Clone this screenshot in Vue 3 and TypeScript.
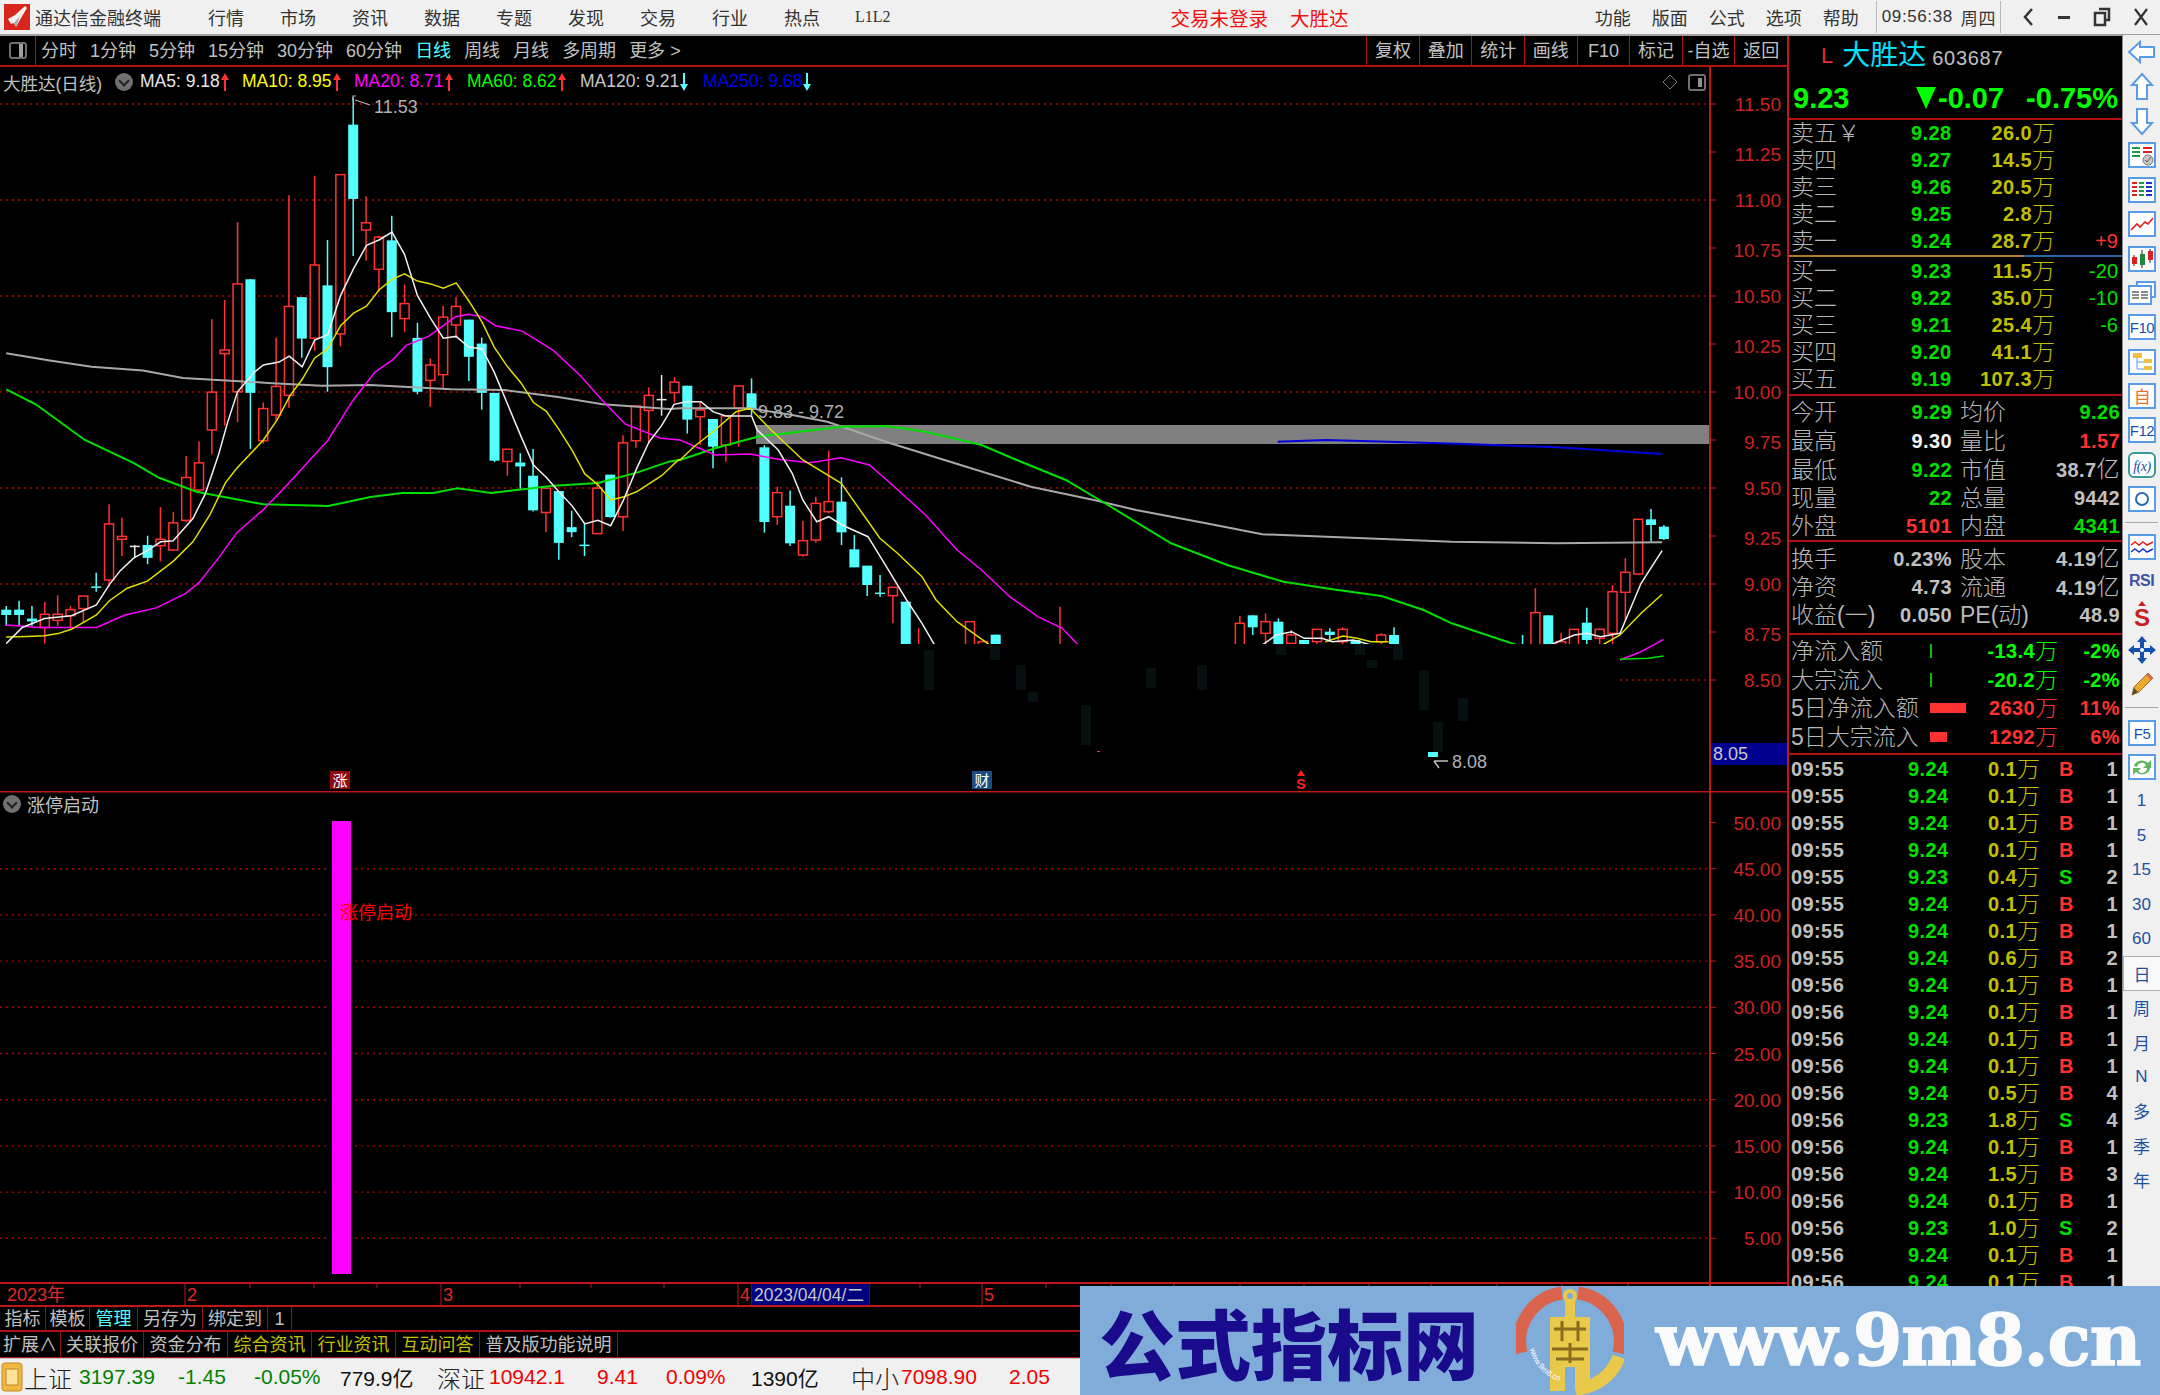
<template>
  <div class="terminal">
    <!-- 标题栏 -->
    <header class="titlebar">
      <svg class="app-logo" width="26" height="26" viewBox="0 0 26 26">
        <rect width="26" height="26" fill="#d8261c" />
        <path d="M4 15 L11 11 L21 2 L23 4 L17 14 L12 23 L10 19 L7 20 Z" fill="#f4f0ee" />
        <path d="M10 19 L16 12 L12 23 Z" fill="#a8a8a8" />
      </svg>
      <span class="app-name">通达信金融终端</span>
      <nav class="menu main-menu">
        <span v-for="m in mainMenu" :key="m">{{ m }}</span>
        <span class="l1l2">L1L2</span>
      </nav>
      <div class="login">交易未登录<span>大胜达</span></div>
      <div class="title-right">
        <nav class="menu side-menu">
          <span v-for="m in sideMenu" :key="m">{{ m }}</span>
        </nav>
        <div class="clock"><span>09:56:38</span><span>周四</span></div>
        <div class="win-btns">
          <svg width="14" height="22" viewBox="0 0 14 22"><path d="M11 3 L4 11 L11 19" fill="none" stroke="#333" stroke-width="2.5" /></svg>
          <svg width="16" height="22" viewBox="0 0 16 22"><rect x="2" y="10" width="12" height="3" fill="#333" /></svg>
          <svg width="18" height="22" viewBox="0 0 18 22"><path d="M6 3 H16 V14 H13 M2 7 H12 V19 H2 Z" fill="none" stroke="#333" stroke-width="2.5" /></svg>
          <svg width="18" height="22" viewBox="0 0 18 22"><path d="M3 3 L15 19 M15 3 L3 19" stroke="#333" stroke-width="2.2" /></svg>
        </div>
      </div>
    </header>

    <div class="workspace">
      <main class="main">
        <!-- 周期工具条 -->
        <div class="toolbar">
          <div class="toggle-cell"><i class="toggle-icon"></i></div>
          <div class="periods">
            <span v-for="p in periods" :key="p" :class="{ active: p === '日线' }">{{ p }}</span>
            <span>更多 &gt;</span>
          </div>
          <div class="tools">
            <span v-for="t in tools" :key="t">{{ t }}</span>
          </div>
        </div>

        <!-- K线主图 -->
        <section class="pane pane-kline">
          <svg class="chart" width="1787" height="724" viewBox="0 67 1787 724">
            <defs>
              <clipPath id="visible-area">
                <rect x="0" y="67" width="1620" height="577" />
                <rect x="1620" y="67" width="90" height="724" />
              </clipPath>
            </defs>
            <line v-for="y in gridTop" :key="y" x1="0" :y1="y" x2="1710" :y2="y" class="dotted" />
            <line x1="1620" y1="680" x2="1710" y2="680" class="dotted" />
            <rect x="756" y="425" width="954" height="19" fill="#808080" />
            <rect v-for="g in ghosts" :key="g[0]" :x="g[0]" :y="g[1]" width="10" :height="g[2]" fill="#061010" />
            <g clip-path="url(#visible-area)">
              <g v-for="c in candles" :key="c.i">
                <template v-if="c.kind === 'r'">
                  <line :x1="c.x" :y1="c.hi" :x2="c.x" :y2="c.top" stroke="#ff3232" stroke-width="1.5" />
                  <line :x1="c.x" :y1="c.bot" :x2="c.x" :y2="c.lo" stroke="#ff3232" stroke-width="1.5" />
                  <rect :x="c.x - 4.5" :y="c.top" width="9" :height="c.bot - c.top" fill="#000" stroke="#ff3232" stroke-width="1.5" />
                </template>
                <template v-else>
                  <line :x1="c.x" :y1="c.hi" :x2="c.x" :y2="c.lo" :stroke="c.kind === 'c' ? '#54ffff' : '#e8e8e8'" stroke-width="1.5" />
                  <rect v-if="c.bot - c.top > 1" :x="c.x - 5" :y="c.top" width="10" :height="c.bot - c.top" fill="#54ffff" />
                  <line v-else :x1="c.x - 5" :y1="c.top" :x2="c.x + 5" :y2="c.top" :stroke="c.kind === 'c' ? '#54ffff' : '#e8e8e8'" stroke-width="1.5" />
                </template>
              </g>
              <polyline v-for="(l, n) in maLines" :key="n" :points="l.points" :stroke="l.color" :stroke-width="l.width" fill="none" />
            </g>
            <polyline :points="ma20Tail" stroke="#ff00ff" stroke-width="1.5" fill="none" />
            <polyline :points="ma60Tail" stroke="#00e000" stroke-width="1.5" fill="none" />

            <!-- 最高最低标注 -->
            <path d="M353 101 V96 H356 M355 100 L370 105" stroke="#b0b0b0" stroke-width="1.2" fill="none" />
            <text x="374" y="113" class="mark-text">11.53</text>
            <text x="758" y="418" class="mark-text">9.83 - 9.72</text>
            <rect x="1097" y="751" width="3" height="1" fill="#ff3232" />
            <rect x="1428" y="752" width="10" height="5" fill="#54ffff" />
            <path d="M1448 761 H1434 M1434 761 L1439 768" stroke="#c0c0c0" stroke-width="1.5" fill="none" />
            <text x="1452" y="768" class="mark-text">8.08</text>

            <!-- 事件标记 -->
            <rect x="330" y="771" width="20" height="18" fill="#8c0c10" />
            <text x="340" y="786" class="badge-text">涨</text>
            <rect x="972" y="771" width="20" height="18" fill="#1c4c80" />
            <text x="982" y="786" class="badge-text">财</text>
            <path d="M1301 770 L1305 776 H1297 Z" fill="#ff2020" />
            <text x="1301" y="789" class="s-mark">S</text>

            <!-- 价格轴 -->
            <g v-for="a in priceAxis" :key="a.label">
              <line x1="1710" :y1="a.y" x2="1716" :y2="a.y" stroke="#c01818" />
              <text x="1781" :y="a.textY" class="axis-text">{{ a.label }}</text>
            </g>
            <rect x="1711" y="743" width="76" height="22" fill="#000090" />
            <text x="1713" y="760" class="price-tag">8.05</text>
            <line x1="1710" y1="67" x2="1710" y2="791" stroke="#c01818" stroke-width="2" />
          </svg>

          <div class="legend">
            <span class="stock-title">大胜达(日线)</span>
            <i class="round-btn"></i>
            <span v-for="m in legend" :key="m.name" class="ma-item" :style="{ color: m.color, left: m.left + 'px' }"><span>{{ m.name }}: {{ m.value }}</span><svg width="10" height="20" viewBox="0 0 10 20">
                <path v-if="m.up" d="M5 1 L9 8 H6 V19 H4 V8 H1 Z" fill="#ff3030" />
                <path v-else d="M4 1 H6 V12 H9 L5 19 L1 12 H4 Z" fill="#54ffff" />
              </svg></span>
          </div>
          <svg class="corner-icons" width="46" height="20" viewBox="0 0 46 20">
            <path d="M9 3 L16 10 L9 17 L2 10 Z" fill="none" stroke="#808080" />
            <rect x="28" y="3" width="16" height="15" rx="2" fill="none" stroke="#707070" stroke-width="2" />
            <rect x="37" y="6" width="4" height="9" fill="#909090" />
          </svg>
        </section>

        <!-- 副图 -->
        <section class="pane pane-sub">
          <svg class="chart" width="1787" height="491" viewBox="0 791 1787 491">
            <line x1="0" y1="791.5" x2="1787" y2="791.5" stroke="#c01818" stroke-width="2" />
            <g v-for="g in subAxis" :key="g.label">
              <template v-if="g.label !== '50.00'">
                <line x1="0" :y1="g.y" x2="328" :y2="g.y" class="dotted" />
                <line x1="355" :y1="g.y" x2="1710" :y2="g.y" class="dotted" />
              </template>
              <line x1="1710" :y1="g.y" x2="1716" :y2="g.y" stroke="#c01818" />
              <text x="1781" :y="g.y + 7" class="axis-text">{{ g.label }}</text>
            </g>
            <rect x="332" y="821" width="19" height="453" fill="#ff00ff" />
            <text x="340" y="919" class="signal-text">涨停启动</text>
            <line x1="1710" y1="791" x2="1710" y2="1282" stroke="#c01818" stroke-width="2" />
          </svg>
          <div class="sub-title"><i class="round-btn"></i><span>涨停启动</span></div>
        </section>

        <!-- 时间轴 -->
        <svg class="time-axis" width="1787" height="25" viewBox="0 1282 1787 25">
          <line x1="0" y1="1283" x2="1787" y2="1283" stroke="#c01818" stroke-width="2" />
          <line x1="0" y1="1306" x2="1787" y2="1306" stroke="#c01818" stroke-width="2" />
          <line v-for="x in monthLines" :key="x" :x1="x" y1="1283" :x2="x" y2="1306" stroke="#c01818" />
          <line v-for="x in dayTicks" :key="x" :x1="x" y1="1283" :x2="x" y2="1288" stroke="#c01818" />
          <line x1="1710" y1="1283" x2="1710" y2="1306" stroke="#c01818" stroke-width="2" />
          <rect x="752" y="1284" width="117" height="21" fill="#000080" />
          <text x="7" y="1301" class="time-text">2023年</text>
          <text x="187" y="1301" class="time-text">2</text>
          <text x="443" y="1301" class="time-text">3</text>
          <text x="740" y="1301" class="time-text">4</text>
          <text x="754" y="1301" class="date-text">2023/04/04/二</text>
          <text x="984" y="1301" class="time-text">5</text>
        </svg>

        <div class="tab-row first">
          <span v-for="t in tabsOne" :key="t.text" :class="t.tone">{{ t.text }}</span>
        </div>
        <div class="tab-row second">
          <span v-for="t in tabsTwo" :key="t.text" :class="t.tone">{{ t.text }}</span>
        </div>
      </main>

      <!-- 右侧盘口 -->
      <aside class="quote">
        <div class="q-name"><span class="flag">L</span><span class="name">大胜达</span><span class="code">603687</span></div>
        <div class="q-price">
          <span class="last">9.23</span>
          <span class="chg"><i class="down-tri"></i>-0.07</span>
          <span class="pct">-0.75%</span>
        </div>

        <div class="book sell">
          <div v-for="r in sellBook" :key="r.label" class="book-row">
            <span class="cjk">{{ r.label }}</span><b class="green">{{ r.price }}</b>
            <span class="vol"><b>{{ r.vol }}</b><em>万</em></span><span class="delta" :class="r.deltaTone">{{ r.delta }}</span>
          </div>
        </div>
        <div class="book-split"></div>
        <div class="book buy">
          <div v-for="r in buyBook" :key="r.label" class="book-row">
            <span class="cjk">{{ r.label }}</span><b class="green">{{ r.price }}</b>
            <span class="vol"><b>{{ r.vol }}</b><em>万</em></span><span class="delta" :class="r.deltaTone">{{ r.delta }}</span>
          </div>
        </div>

        <div class="stats s5">
          <div v-for="r in statsOne" :key="r[0]" class="stat-row">
            <span class="cjk">{{ r[0] }}</span><b :class="r[2]">{{ r[1] }}<em v-if="r[3]">{{ r[3] }}</em></b>
            <span class="cjk">{{ r[4] }}</span><b :class="r[6]">{{ r[5] }}<em v-if="r[7]">{{ r[7] }}</em></b>
          </div>
        </div>
        <div class="stats s3">
          <div v-for="r in statsTwo" :key="r[0]" class="stat-row">
            <span class="cjk">{{ r[0] }}</span><b :class="r[2]">{{ r[1] }}<em v-if="r[3]">{{ r[3] }}</em></b>
            <span class="cjk">{{ r[4] }}</span><b :class="r[6]">{{ r[5] }}<em v-if="r[7]">{{ r[7] }}</em></b>
          </div>
        </div>

        <div class="flows">
          <div v-for="f in flows" :key="f.label" class="flow-row" :class="f.tone">
            <span class="cjk">{{ f.label }}</span>
            <span class="flow-val"><i class="flow-bar" :style="{ width: f.bar + 'px', height: f.bar > 2 ? '10px' : '14px' }"></i><b>{{ f.val }}</b><em>万</em></span>
            <b class="flow-pct">{{ f.pct }}</b>
          </div>
        </div>

        <div class="trades">
          <div v-for="(t, n) in trades" :key="n" class="trade-row">
            <b class="grey">{{ t.time }}</b><b class="green">{{ t.price }}</b>
            <span class="vol"><b>{{ t.vol }}</b><em>万</em></span>
            <b class="side" :class="t.side === 'B' ? 'red' : 'green'">{{ t.side }}</b>
            <b class="count grey">{{ t.count }}</b>
          </div>
        </div>
      </aside>

      <!-- 右侧工具栏 -->
      <aside class="rail">
        <div class="rail-item"><svg width="30" height="26" viewBox="0 0 30 26"><path d="M2 13 L13 3 V8 H27 V18 H13 V23 Z" class="arrow" /></svg></div>
        <div class="rail-item"><svg width="26" height="30" viewBox="0 0 26 30"><path d="M13 2 L23 13 H18 V27 H8 V13 H3 Z" class="arrow" /></svg></div>
        <div class="rail-item"><svg width="26" height="30" viewBox="0 0 26 30"><path d="M13 28 L23 17 H18 V3 H8 V17 H3 Z" class="arrow" /></svg></div>
        <div class="rail-item"><svg width="28" height="26" viewBox="0 0 28 26">
          <rect x="1" y="1" width="26" height="24" class="ibox" />
          <path d="M4 6 H12 M4 10 H12 M4 14 H12" stroke="#1a9a3a" stroke-width="2" /><path d="M15 6 H24 M15 10 H24" stroke="#e02020" stroke-width="2" />
          <circle cx="20" cy="18" r="5" fill="#c8c8c8" stroke="#777" /><path d="M17 18 L19 20 L23 15" stroke="#555" fill="none" />
        </svg></div>
        <div class="rail-item"><svg width="28" height="26" viewBox="0 0 28 26">
          <rect x="1" y="1" width="26" height="24" class="ibox" />
          <path d="M4 6 H9 M4 10 H9 M4 14 H9 M4 18 H9" stroke="#e02020" stroke-width="2" /><path d="M11 6 H16 M11 10 H16 M11 14 H16 M11 18 H16" stroke="#1a9a3a" stroke-width="2" /><path d="M18 6 H24 M18 10 H24 M18 14 H24 M18 18 H24" stroke="#2030d0" stroke-width="2" />
        </svg></div>
        <div class="rail-item"><svg width="28" height="26" viewBox="0 0 28 26">
          <rect x="1" y="1" width="26" height="24" class="ibox" />
          <path d="M3 19 L9 13 L12 16 L17 11 L20 13 L25 7" stroke="#e02020" stroke-width="1.6" fill="none" />
        </svg></div>
        <div class="rail-item"><svg width="28" height="26" viewBox="0 0 28 26">
          <rect x="1" y="1" width="26" height="24" class="ibox" />
          <path d="M6 9 V20 M14 4 V22 M22 3 V17" stroke="#222" /><rect x="4" y="11" width="5" height="7" fill="#e02020" /><rect x="12" y="8" width="5" height="11" fill="#1a8a3a" /><rect x="20" y="5" width="5" height="9" fill="#e02020" />
        </svg></div>
        <div class="rail-item"><svg width="28" height="26" viewBox="0 0 28 26">
          <path d="M9 5 V2 H27 V17 H23" fill="#fff" stroke="#5a9be8" stroke-width="2" />
          <rect x="1" y="6" width="22" height="18" class="ibox" />
          <path d="M4 12 H11 M13 12 H20 M4 15 H11 M13 15 H20 M4 18 H11 M13 18 H20" stroke="#666" stroke-width="1.6" />
        </svg></div>
        <div class="rail-item"><svg width="28" height="26" viewBox="0 0 28 26"><rect x="1" y="1" width="26" height="24" class="ibox" /><text x="14" y="19" class="itext">F10</text></svg></div>
        <div class="rail-item"><svg width="28" height="26" viewBox="0 0 28 26">
          <rect x="1" y="1" width="26" height="24" class="ibox" />
          <path d="M9 8 V20 H16 M9 13 H16" stroke="#5a9be8" fill="none" /><rect x="5" y="4" width="9" height="5" fill="#f0c040" /><rect x="16" y="10" width="8" height="4" fill="#f0c040" /><rect x="16" y="17" width="8" height="4" fill="#f0c040" />
        </svg></div>
        <div class="rail-item"><svg width="28" height="26" viewBox="0 0 28 26"><rect x="1" y="1" width="26" height="24" class="ibox" /><text x="14" y="20" class="itext orange">自</text></svg></div>
        <div class="rail-item"><svg width="28" height="26" viewBox="0 0 28 26"><rect x="1" y="1" width="26" height="24" class="ibox" /><text x="14" y="19" class="itext">F12</text></svg></div>
        <div class="rail-item"><svg width="28" height="26" viewBox="0 0 28 26"><rect x="1" y="1" width="26" height="24" rx="5" class="ibox teal" /><text x="14" y="19" class="itext fx">f(x)</text></svg></div>
        <div class="rail-item"><svg width="28" height="26" viewBox="0 0 28 26"><rect x="1" y="1" width="26" height="24" class="ibox" /><circle cx="14" cy="13" r="6" fill="none" stroke="#2a6ab0" stroke-width="2" /></svg></div>
        <div class="rail-div"></div>
        <div class="rail-item"><svg width="28" height="26" viewBox="0 0 28 26">
          <rect x="1" y="1" width="26" height="24" class="ibox" />
          <path d="M3 11 L7 8 L11 11 L15 8 L19 11 L25 8" stroke="#e02020" fill="none" stroke-width="1.5" /><path d="M3 18 L7 15 L11 18 L15 15 L19 18 L25 15" stroke="#2030d0" fill="none" stroke-width="1.5" />
        </svg></div>
        <div class="rail-item rsi">RSI</div>
        <div class="rail-item"><svg width="26" height="30" viewBox="0 0 26 30"><path d="M13 1 L17 6 H9 Z" fill="#d02020" /><text x="13" y="26" class="dollar">S</text></svg></div>
        <div class="rail-item"><svg width="30" height="30" viewBox="0 0 30 30">
          <path d="M15 1 L20 7 H17 V13 H23 V10 L29 15 L23 20 V17 H17 V23 H20 L15 29 L10 23 H13 V17 H7 V20 L1 15 L7 10 V13 H13 V7 H10 Z" fill="#1450b0" />
          <circle cx="15" cy="15" r="2" fill="#fff" />
        </svg></div>
        <div class="rail-item"><svg width="28" height="28" viewBox="0 0 28 28">
          <path d="M4 25 L6 17 L20 3 L25 8 L11 22 Z" fill="#eda832" stroke="#a07020" /><path d="M4 25 L6 18 L10 22 Z" fill="#5a4a30" /><path d="M20 3 L25 8 L23 10 L18 5 Z" fill="#d96a5a" />
        </svg></div>
        <div class="rail-div low"></div>
        <div class="rail-item"><svg width="28" height="26" viewBox="0 0 28 26"><rect x="1" y="1" width="26" height="24" class="ibox" /><text x="14" y="19" class="itext">F5</text></svg></div>
        <div class="rail-item"><svg width="28" height="26" viewBox="0 0 28 26">
          <rect x="1" y="1" width="26" height="24" class="ibox" />
          <path d="M6 12 A8 7 0 0 1 20 9 L23 6 V14 H15 L18 11 A5 5 0 0 0 9 13 Z M22 14 A8 7 0 0 1 8 18 L5 21 V14 H13 L10 17 A5 5 0 0 0 19 14 Z" fill="#5cb85c" />
        </svg></div>
        <div v-for="p in railPeriods" :key="p" class="rail-item rail-text" :class="{ selected: p === '日' }">{{ p }}</div>
      </aside>
    </div>

    <!-- 底部指数栏 -->
    <footer class="statusbar">
      <svg class="idx-icon" width="22" height="30" viewBox="0 0 22 30">
        <rect x="1" y="1" width="20" height="28" rx="3" fill="#f0b840" stroke="#c08820" />
        <rect x="5" y="7" width="12" height="16" fill="#fbe49a" stroke="#c08820" />
      </svg>
      <span v-for="(s, n) in indexBar" :key="n" class="idx" :class="s.tone" :style="{ width: s.w + 'px' }">{{ s.text }}</span>
    </footer>

    <!-- 水印横幅 -->
    <div class="banner">
      <span class="banner-title">公式指标网</span>
      <svg class="banner-logo" width="108" height="108" viewBox="0 0 108 108">
        <defs><path id="ring-text" d="M14 62 A42 42 0 0 0 44 94" /></defs>
        <path d="M5 66 A49 49 0 0 1 46 6" fill="none" stroke="#d9634c" stroke-width="13" />
        <path d="M62 6 A49 49 0 0 1 103 66" fill="none" stroke="#d9634c" stroke-width="13" />
        <path d="M103 70 A49 49 0 0 1 60 102" fill="none" stroke="#e8c94a" stroke-width="13" />
        <circle cx="54" cy="9" r="5" fill="none" stroke="#e8c94a" stroke-width="4" />
        <path d="M49 14 H59 V30 H74 V104 H59 V80 H49 V104 H34 V30 H49 Z" fill="#e8c94a" />
        <path d="M38 42 H70 M46 34 V54 M62 34 V54 M36 62 H72 M54 56 V76 M40 72 H68" stroke="#8a6a1c" stroke-width="3" fill="none" />
        <text class="ring-label"><textPath href="#ring-text">www.9m8.cn</textPath></text>
      </svg>
      <span class="banner-url">www.9m8.cn</span>
    </div>
  </div>
</template>

<script setup lang="ts">
interface Candle {
  i: number
  kind: string
  x: number
  hi: number
  top: number
  bot: number
  lo: number
}

type RawCandle = [number, string, number, number, number, number]
type Pt = [number, number]

const STEP = 12.85
const xAt = (i: number) => 6.25 + i * STEP

// 坐标是从两段放大图上读的，这里换算回屏幕像素
const leftPt = (p: Pt): Pt => [p[0] / 2.24, 90 + p[1] / 2.8]
const rightPt = (p: Pt): Pt => [680 + p[0] / 1.4255, 340 + p[1] / 3]
const toPoints = (pts: Pt[]) => pts.map((p) => `${p[0].toFixed(1)},${p[1].toFixed(1)}`).join(' ')

const leftRaw: RawCandle[] = [
  [0, 'c', 1445, 1455, 1470, 1500], [1, 'c', 1430, 1455, 1470, 1500], [2, 'c', 1445, 1480, 1488, 1500],
  [3, 'r', 1433, 1468, 1505, 1550], [4, 'r', 1415, 1468, 1485, 1500], [5, 'r', 1445, 1455, 1472, 1505],
  [6, 'r', 1417, 1417, 1452, 1490], [7, 'c', 1352, 1392, 1392, 1405], [8, 'r', 1160, 1215, 1372, 1390],
  [9, 'r', 1198, 1250, 1258, 1305], [10, 'w', 1275, 1278, 1278, 1310], [11, 'c', 1248, 1274, 1310, 1328],
  [12, 'r', 1168, 1258, 1276, 1320], [13, 'r', 1182, 1212, 1288, 1290], [14, 'r', 1025, 1085, 1205, 1210],
  [15, 'r', 984, 1044, 1120, 1125], [16, 'r', 642, 846, 952, 1020], [17, 'r', 588, 728, 738, 940],
  [18, 'r', 370, 543, 845, 930], [19, 'c', 530, 530, 848, 1005], [20, 'r', 875, 892, 982, 990],
  [21, 'r', 693, 830, 910, 925], [22, 'r', 295, 606, 855, 890], [23, 'c', 580, 580, 696, 750],
  [24, 'r', 240, 490, 695, 730], [25, 'c', 420, 547, 776, 845], [26, 'r', 237, 237, 683, 718],
  [27, 'c', 20, 97, 305, 465], [28, 'r', 298, 372, 392, 478], [29, 'r', 408, 412, 502, 565],
  [30, 'c', 352, 421, 622, 692], [31, 'r', 545, 598, 640, 677], [32, 'c', 652, 694, 845, 852],
  [33, 'r', 752, 770, 813, 887], [34, 'r', 605, 636, 797, 835], [35, 'r', 580, 606, 658, 695],
  [36, 'c', 643, 643, 747, 815], [37, 'c', 693, 710, 848, 895], [38, 'c', 848, 848, 1038, 1042],
  [39, 'r', 1006, 1006, 1040, 1080], [40, 'c', 1017, 1043, 1054, 1118], [41, 'c', 1005, 1080, 1177, 1180],
  [42, 'r', 1115, 1115, 1183, 1238], [43, 'c', 1123, 1123, 1268, 1315], [44, 'c', 1178, 1224, 1238, 1252],
  [45, 'c', 1212, 1275, 1275, 1305], [46, 'r', 1095, 1115, 1242, 1243], [47, 'c', 1077, 1077, 1196, 1197],
  [48, 'r', 967, 988, 1195, 1235], [49, 'r', 885, 885, 982, 1002], [50, 'r', 833, 855, 897, 990],
  [51, 'w', 798, 867, 867, 912], [52, 'r', 804, 818, 847, 875], [53, 'c', 828, 828, 923, 962],
]

const rightRaw: RawCandle[] = [
  [54, 'r', 185, 210, 230, 315], [55, 'c', 237, 237, 320, 385], [56, 'r', 225, 228, 315, 365],
  [57, 'r', 138, 138, 205, 320], [58, 'c', 115, 160, 210, 225], [59, 'c', 315, 322, 546, 578],
  [60, 'r', 440, 458, 530, 555], [61, 'c', 452, 497, 610, 618], [62, 'r', 542, 602, 645, 650],
  [63, 'r', 470, 490, 600, 608], [64, 'r', 332, 485, 515, 520], [65, 'c', 412, 485, 577, 615],
  [66, 'c', 585, 628, 682, 682], [67, 'c', 677, 677, 735, 768], [68, 'c', 705, 760, 760, 770],
  [69, 'r', 742, 742, 767, 850], [70, 'c', 785, 785, 940, 940], [71, 'r', 865, 920, 940, 940],
  [75, 'r', 845, 845, 940, 940], [76, 'r', 905, 905, 940, 940], [77, 'c', 884, 884, 940, 940],
  [82, 'r', 800, 930, 940, 940], [96, 'r', 828, 850, 940, 940], [97, 'c', 826, 826, 862, 885],
  [98, 'r', 820, 845, 880, 940], [99, 'c', 835, 845, 940, 940], [100, 'r', 870, 885, 910, 940],
  [101, 'c', 900, 900, 940, 940], [102, 'r', 868, 868, 905, 940], [103, 'c', 865, 875, 885, 905],
  [104, 'r', 862, 868, 905, 940], [105, 'c', 900, 900, 940, 940], [107, 'r', 880, 885, 905, 940],
  [108, 'c', 862, 885, 940, 940], [118, 'c', 885, 930, 940, 940], [119, 'r', 745, 818, 940, 940],
  [120, 'c', 826, 826, 940, 940], [121, 'r', 880, 905, 940, 940], [122, 'r', 868, 868, 940, 940],
  [123, 'c', 803, 848, 900, 940], [124, 'r', 866, 868, 895, 940], [125, 'r', 735, 755, 880, 940],
  [126, 'r', 655, 697, 757, 840], [127, 'r', 538, 538, 702, 702], [128, 'c', 507, 538, 555, 605],
  [129, 'c', 555, 560, 597, 600],
]

const candles: Candle[] = [
  ...leftRaw.map((c) => {
    const y = (v: number) => 90 + v / 2.8
    return { i: c[0], kind: c[1], x: xAt(c[0]), hi: y(c[2]), top: y(c[3]), bot: y(c[4]), lo: y(c[5]) }
  }),
  ...rightRaw.map((c) => {
    const y = (v: number) => 340 + v / 3
    return { i: c[0], kind: c[1], x: xAt(c[0]), hi: y(c[2]), top: y(c[3]), bot: y(c[4]), lo: y(c[5]) }
  }),
]

// 均线
const ma5: Pt[] = [
  ...([[14, 1550], [50, 1505], [100, 1480], [160, 1472], [216, 1442], [245, 1385], [270, 1345], [300, 1310], [330, 1290], [360, 1265], [388, 1262], [432, 1200], [460, 1130], [490, 1020], [510, 930], [532, 845], [570, 790], [590, 770], [625, 762], [648, 745], [677, 775], [705, 700], [734, 685], [763, 575], [792, 500], [821, 435], [849, 420], [878, 398], [906, 460], [935, 575], [965, 640], [993, 695], [1022, 690], [1050, 720], [1080, 725], [1107, 790], [1137, 880], [1167, 970], [1195, 1050], [1224, 1085], [1252, 1125], [1282, 1165], [1310, 1215], [1339, 1205], [1368, 1220], [1396, 1150], [1426, 1060], [1454, 985], [1482, 940], [1510, 880], [1540, 872]] as Pt[]).map(leftPt),
  ...([[10, 185], [30, 185], [47, 215], [65, 228], [102, 228], [110, 270], [140, 330], [160, 400], [175, 480], [195, 545], [212, 530], [231, 555], [268, 590], [300, 700], [323, 780], [345, 850], [367, 930]] as Pt[]).map(rightPt),
]
const ma10: Pt[] = [
  ...([[14, 1532], [60, 1530], [100, 1528], [130, 1522], [160, 1510], [216, 1470], [245, 1430], [285, 1395], [330, 1375], [388, 1320], [432, 1265], [470, 1190], [505, 1100], [530, 1060], [590, 980], [620, 925], [650, 855], [677, 810], [705, 750], [734, 725], [763, 660], [792, 625], [821, 605], [849, 560], [878, 530], [906, 515], [935, 535], [965, 543], [993, 555], [1022, 540], [1050, 590], [1080, 650], [1107, 720], [1137, 775], [1167, 820], [1195, 875], [1224, 900], [1252, 950], [1282, 1010], [1310, 1075], [1339, 1105], [1368, 1148], [1396, 1140], [1426, 1125], [1482, 1080], [1520, 1035]] as Pt[]).map(leftPt),
  ...([[0, 360], [20, 320], [50, 270], [80, 215], [100, 205], [130, 270], [175, 360], [230, 430], [285, 595], [310, 640], [345, 710], [365, 780], [395, 845], [445, 920]] as Pt[]).map(rightPt),
]
const ma20: Pt[] = [
  ...([[14, 1498], [90, 1505], [216, 1505], [280, 1470], [350, 1450], [415, 1410], [445, 1380], [490, 1310], [530, 1240], [590, 1175], [640, 1110], [735, 980], [790, 870], [840, 790], [880, 755], [910, 715], [960, 690], [1020, 635], [1050, 628], [1080, 635], [1110, 660], [1170, 675], [1240, 730], [1300, 800], [1350, 870], [1400, 935], [1480, 975]] as Pt[]).map(leftPt),
  ...([[0, 300], [50, 345], [100, 342], [140, 358], [185, 368], [230, 353], [270, 375], [300, 430], [350, 525], [395, 630], [430, 690], [470, 770], [510, 830], [545, 865], [572, 925]] as Pt[]).map(rightPt),
]
const ma60: Pt[] = [
  ...([[14, 838], [80, 880], [190, 980], [300, 1045], [355, 1085], [440, 1125], [590, 1160], [735, 1165], [830, 1140], [900, 1128], [970, 1128], [1025, 1115], [1100, 1128], [1240, 1108], [1340, 1100], [1430, 1070], [1500, 1040]] as Pt[]).map(leftPt),
  ...([[0, 360], [50, 325], [110, 290], [170, 275], [230, 260], [295, 258], [350, 275], [430, 315], [480, 360], [550, 420], [610, 495], [700, 610], [780, 675], [860, 725], [930, 748], [1000, 768], [1060, 810], [1100, 850], [1200, 920]] as Pt[]).map(rightPt),
]
const ma120: Pt[] = [
  ...([[14, 737], [115, 758], [205, 775], [320, 785], [410, 806], [600, 820], [720, 828], [830, 826], [1010, 838], [1130, 840], [1250, 860], [1350, 880], [1500, 893]] as Pt[]).map(leftPt),
  ...([[0, 205], [100, 205], [160, 225], [210, 245], [300, 310], [400, 375], [500, 440], [590, 480], [650, 510], [750, 550], [830, 583], [940, 592], [1100, 605], [1250, 610], [1400, 607]] as Pt[]).map(rightPt),
]
const ma250: Pt[] = ([[852, 305], [920, 300], [1010, 305], [1120, 312], [1250, 322], [1400, 342]] as Pt[]).map(rightPt)

// 缺口右边几段单独的线
const pieces5: Pt[][] = [
  [[830, 915], [850, 885], [872, 875], [890, 895], [915, 895], [930, 905], [960, 900], [985, 915]],
  [[1240, 915], [1275, 885], [1293, 880], [1312, 890], [1340, 880], [1370, 730], [1400, 632]],
]
const pieces10: Pt[][] = [
  [[920, 905], [945, 888], [965, 895], [985, 905], [1010, 905]],
  [[1315, 915], [1340, 885], [1370, 820], [1400, 763]],
]

const maLines = [
  { points: toPoints(ma120), color: '#a8a8a8', width: 2 },
  { points: toPoints(ma250), color: '#0000e0', width: 2 },
  { points: toPoints(ma60), color: '#00e000', width: 2 },
  { points: toPoints(ma20), color: '#ff00ff', width: 1.5 },
  { points: toPoints(ma10), color: '#e0e000', width: 1.5 },
  { points: toPoints(ma5), color: '#f0f0f0', width: 1.5 },
  ...pieces10.map((p) => ({ points: toPoints(p.map(rightPt)), color: '#e0e000', width: 1.5 })),
  ...pieces5.map((p) => ({ points: toPoints(p.map(rightPt)), color: '#f0f0f0', width: 1.5 })),
]

const ma20Tail = toPoints(([[1340, 960], [1370, 935], [1402, 898]] as Pt[]).map(rightPt))
const ma60Tail = toPoints(([[1340, 958], [1380, 955], [1402, 948]] as Pt[]).map(rightPt))

// 被遮掉区域里隐约可见的残影
const ghosts = [
  [924, 650, 40], [990, 646, 14], [1016, 665, 25], [1028, 692, 10], [1081, 705, 40], [1146, 668, 20],
  [1197, 665, 25], [1276, 644, 11], [1355, 644, 11], [1367, 660, 8], [1393, 644, 16], [1419, 670, 40],
  [1433, 722, 30], [1458, 698, 23],
]

const yOf = (p: number) => 392 + (10 - p) * 192
const gridTop = [11.5, 11, 10.5, 10, 9.5, 9].map(yOf)
// 奇数四分位的刻度文字比刻度线略低两像素
const priceAxis = [11.5, 11.25, 11, 10.75, 10.5, 10.25, 10, 9.75, 9.5, 9.25, 9, 8.75, 8.5].map((p) => ({
  label: p.toFixed(2),
  y: yOf(p),
  textY: yOf(p) + 7 + (p % 0.5 === 0 ? 0 : 2),
}))
const subAxis = [50, 45, 40, 35, 30, 25, 20, 15, 10, 5].map((v, n) => ({
  label: v.toFixed(2),
  y: 822.5 + n * 46.2,
}))

const monthLines = [185, 441, 738, 752, 869, 982]
const dayTicks = [250, 314, 377, 520, 591, 664, 920, 1046, 1111, 1174, 1240, 1304, 1369, 1431, 1497, 1562, 1628]

const mainMenu = ['行情', '市场', '资讯', '数据', '专题', '发现', '交易', '行业', '热点']
const sideMenu = ['功能', '版面', '公式', '选项', '帮助']
const periods = ['分时', '1分钟', '5分钟', '15分钟', '30分钟', '60分钟', '日线', '周线', '月线', '多周期']
const tools = ['复权', '叠加', '统计', '画线', 'F10', '标记', '-自选', '返回']

const legend = [
  { name: 'MA5', value: '9.18', color: '#e8e8e8', left: 140, up: true },
  { name: 'MA10', value: '8.95', color: '#ffff00', left: 242, up: true },
  { name: 'MA20', value: '8.71', color: '#ff00ff', left: 354, up: true },
  { name: 'MA60', value: '8.62', color: '#00ff00', left: 467, up: true },
  { name: 'MA120', value: '9.21', color: '#c8c8c8', left: 580, up: false },
  { name: 'MA250', value: '9.68', color: '#0000e8', left: 703, up: false },
]

const tabsOne = [
  { text: '指标', tone: 'w46' }, { text: '模板', tone: 'w44' }, { text: '管理', tone: 'w48 cyan' },
  { text: '另存为', tone: 'w65' }, { text: '绑定到', tone: 'w65' }, { text: '1', tone: 'w24' },
]
const tabsTwo = [
  { text: '扩展∧', tone: 'w61' }, { text: '关联报价', tone: 'w83' }, { text: '资金分布', tone: 'w84' },
  { text: '综合资讯', tone: 'w84 olive' }, { text: '行业资讯', tone: 'w84 olive' }, { text: '互动问答', tone: 'w84 olive' },
  { text: '普及版功能说明', tone: 'w138' },
]

const sellBook = [
  { label: '卖五￥', price: '9.28', vol: '26.0', delta: '', deltaTone: '' },
  { label: '卖四', price: '9.27', vol: '14.5', delta: '', deltaTone: '' },
  { label: '卖三', price: '9.26', vol: '20.5', delta: '', deltaTone: '' },
  { label: '卖二', price: '9.25', vol: '2.8', delta: '', deltaTone: '' },
  { label: '卖一', price: '9.24', vol: '28.7', delta: '+9', deltaTone: 'red' },
]
const buyBook = [
  { label: '买一', price: '9.23', vol: '11.5', delta: '-20', deltaTone: 'green' },
  { label: '买二', price: '9.22', vol: '35.0', delta: '-10', deltaTone: 'green' },
  { label: '买三', price: '9.21', vol: '25.4', delta: '-6', deltaTone: 'green' },
  { label: '买四', price: '9.20', vol: '41.1', delta: '', deltaTone: '' },
  { label: '买五', price: '9.19', vol: '107.3', delta: '', deltaTone: '' },
]

// 标签, 值, 颜色, 单位, 标签, 值, 颜色, 单位
const statsOne = [
  ['今开', '9.29', 'green', '', '均价', '9.26', 'green', ''],
  ['最高', '9.30', 'white', '', '量比', '1.57', 'red', ''],
  ['最低', '9.22', 'green', '', '市值', '38.7', 'grey', '亿'],
  ['现量', '22', 'green', '', '总量', '9442', 'grey', ''],
  ['外盘', '5101', 'red', '', '内盘', '4341', 'green', ''],
]
const statsTwo = [
  ['换手', '0.23%', 'grey', '', '股本', '4.19', 'grey', '亿'],
  ['净资', '4.73', 'grey', '', '流通', '4.19', 'grey', '亿'],
  ['收益(一)', '0.050', 'grey', '', 'PE(动)', '48.9', 'grey', ''],
]

const flows = [
  { label: '净流入额', bar: 2, val: '-13.4', pct: '-2%', tone: 'flow-down' },
  { label: '大宗流入', bar: 2, val: '-20.2', pct: '-2%', tone: 'flow-down' },
  { label: '5日净流入额', bar: 36, val: '2630', pct: '11%', tone: 'flow-up' },
  { label: '5日大宗流入', bar: 17, val: '1292', pct: '6%', tone: 'flow-up' },
]

const tradeRaw = [
  '09:55 9.24 0.1 B 1', '09:55 9.24 0.1 B 1', '09:55 9.24 0.1 B 1', '09:55 9.24 0.1 B 1',
  '09:55 9.23 0.4 S 2', '09:55 9.24 0.1 B 1', '09:55 9.24 0.1 B 1', '09:55 9.24 0.6 B 2',
  '09:56 9.24 0.1 B 1', '09:56 9.24 0.1 B 1', '09:56 9.24 0.1 B 1', '09:56 9.24 0.1 B 1',
  '09:56 9.24 0.5 B 4', '09:56 9.23 1.8 S 4', '09:56 9.24 0.1 B 1', '09:56 9.24 1.5 B 3',
  '09:56 9.24 0.1 B 1', '09:56 9.23 1.0 S 2', '09:56 9.24 0.1 B 1', '09:56 9.24 0.1 B 1',
]
const trades = tradeRaw.map((line) => {
  const [time, price, vol, side, count] = line.split(' ')
  return { time, price, vol, side, count }
})

const railPeriods = ['1', '5', '15', '30', '60', '日', '周', '月', 'N', '多', '季', '年']

// w 是这一列到下一列起点的宽度
const indexBar = [
  { text: '上证', tone: 'cn', w: 56 },
  { text: '3197.39', tone: 'up', w: 99 },
  { text: '-1.45', tone: 'up', w: 76 },
  { text: '-0.05%', tone: 'up', w: 86 },
  { text: '779.9亿', tone: 'ink', w: 96 },
  { text: '深证', tone: 'cn', w: 53 },
  { text: '10942.1', tone: 'dn', w: 108 },
  { text: '9.41', tone: 'dn', w: 69 },
  { text: '0.09%', tone: 'dn', w: 85 },
  { text: '1390亿', tone: 'ink', w: 99 },
  { text: '中小', tone: 'cn', w: 51 },
  { text: '7098.90', tone: 'dn', w: 108 },
  { text: '2.05', tone: 'dn', w: 60 },
]
</script>

<style scoped>
.terminal {
  position: relative;
  width: 2160px;
  height: 1395px;
  overflow: hidden;
  display: flex;
  flex-direction: column;
  background: #000;
  color: #c0c0c0;
  font-family: "Liberation Sans", "Noto Sans CJK SC", sans-serif;
  font-size: 18px;
}

.titlebar {
  height: 36px;
  flex: none;
  display: flex;
  align-items: center;
  box-sizing: border-box;
  background: #f0f0f0;
  border-bottom: 2px solid #a0a0a0;
  color: #333;
}
.app-logo {
  margin-left: 4px;
  flex: none;
}
.app-name {
  margin-left: 5px;
  white-space: nowrap;
}
.menu {
  display: flex;
  white-space: nowrap;
}
.main-menu {
  margin-left: 47px;
  gap: 36px;
}
.l1l2 {
  font-family: "Liberation Serif", serif;
  font-size: 16px;
  line-height: 26px;
  margin-left: -1px;
}
.login {
  margin-left: 280px;
  color: #f01010;
  font-size: 19.5px;
  white-space: nowrap;
}
.login span {
  margin-left: 22px;
}
.title-right {
  margin-left: auto;
  display: flex;
  align-items: center;
}
.side-menu {
  gap: 21px;
}
.clock {
  display: flex;
  gap: 8px;
  height: 32px;
  align-items: center;
  margin-left: 17px;
  padding: 0 4px 0 5px;
  border-left: 1px solid #b8b8b8;
  border-right: 1px solid #b8b8b8;
  font-size: 17px;
  letter-spacing: 0.6px;
  white-space: nowrap;
}
.win-btns {
  display: flex;
  align-items: center;
  gap: 21px;
  margin-left: 20px;
  margin-right: 10px;
}

.workspace {
  height: 1322px;
  flex: none;
  display: flex;
}
.main {
  width: 1787px;
  flex: none;
  display: flex;
  flex-direction: column;
}

.toolbar {
  height: 31px;
  flex: none;
  display: flex;
  align-items: center;
  box-sizing: border-box;
  border-bottom: 2px solid #b01010;
  line-height: 26px;
}
.toggle-cell {
  width: 36px;
  height: 100%;
  display: flex;
  align-items: center;
  justify-content: center;
  box-sizing: border-box;
  border-right: 1px solid #b01010;
}
.toggle-icon {
  width: 18px;
  height: 17px;
  box-sizing: border-box;
  border: 2px solid #707070;
  border-radius: 3px;
  background: linear-gradient(90deg, transparent 55%, #a0a0a0 55%, #a0a0a0 85%, transparent 85%);
}
.periods {
  display: flex;
  gap: 13px;
  margin-left: 5px;
  white-space: nowrap;
}
.periods .active {
  color: #54ffff;
}
.tools {
  margin-left: auto;
  display: flex;
  height: 100%;
}
.tools span {
  width: 52.6px;
  display: flex;
  align-items: center;
  justify-content: center;
  box-sizing: border-box;
  border-left: 1px solid #b01010;
  white-space: nowrap;
}

.pane {
  position: relative;
  flex: none;
}
.pane-kline {
  height: 724px;
}
.pane-sub {
  height: 491px;
}
.chart {
  display: block;
}
.dotted {
  stroke: #b00000;
  stroke-width: 1.4;
  stroke-dasharray: 2 4;
}
.axis-text {
  fill: #cc2222;
  font-size: 19px;
  text-anchor: end;
}
.mark-text {
  fill: #b0b0b0;
  font-size: 18px;
}
.badge-text {
  fill: #fff;
  font-size: 15px;
  text-anchor: middle;
}
.s-mark {
  fill: #ff2020;
  font-size: 14px;
  font-weight: 700;
  text-anchor: middle;
}
.price-tag {
  fill: #c8c8c8;
  font-size: 18px;
}
.signal-text {
  fill: #ff0000;
  font-size: 18px;
}

.legend {
  position: absolute;
  left: 0;
  top: 0;
  right: 90px;
  height: 30px;
  font-size: 17.5px;
}
.stock-title {
  position: absolute;
  left: 3px;
  top: 3px;
  white-space: nowrap;
}
.legend .round-btn {
  position: absolute;
  left: 115px;
  top: 6px;
}
.ma-item {
  position: absolute;
  top: 4px;
  display: flex;
  align-items: center;
  white-space: nowrap;
}
.round-btn {
  width: 18px;
  height: 18px;
  border-radius: 50%;
  background: #707070;
  display: inline-block;
  position: relative;
}
.round-btn::after {
  content: "";
  position: absolute;
  left: 5px;
  top: 4px;
  width: 6px;
  height: 6px;
  border-right: 2px solid #222;
  border-bottom: 2px solid #222;
  transform: rotate(45deg);
}
.corner-icons {
  position: absolute;
  left: 1661px;
  top: 5px;
}
.sub-title {
  position: absolute;
  left: 3px;
  top: 0;
  display: flex;
  align-items: center;
  gap: 6px;
  white-space: nowrap;
}

.time-axis {
  display: block;
  flex: none;
}
.time-text {
  fill: #e02828;
  font-size: 18px;
}
.date-text {
  fill: #c8c8c8;
  font-size: 17.5px;
}

.tab-row {
  flex: none;
  display: flex;
  box-sizing: border-box;
  border-bottom: 2px solid #b01010;
}
.tab-row.first {
  height: 25px;
}
.tab-row.second {
  height: 27px;
}
.tab-row span {
  display: flex;
  align-items: center;
  justify-content: center;
  box-sizing: border-box;
  border-right: 1px solid #8c1010;
  white-space: nowrap;
  overflow: hidden;
  line-height: 22px;
}
.w24 { width: 24px; }
.w44 { width: 44px; }
.w46 { width: 46px; }
.w48 { width: 48px; }
.w61 { width: 61px; }
.w65 { width: 65px; }
.w83 { width: 83px; }
.w84 { width: 84px; }
.w138 { width: 138px; }
.tab-row .cyan { color: #54ffff; }
.tab-row .olive { color: #c0c000; }

/* 盘口 */
.quote {
  width: 335px;
  flex: none;
  overflow: hidden;
  box-sizing: border-box;
  border-left: 2px solid #c01818;
}
.quote b {
  font-size: 20px;
  letter-spacing: 0.4px;
}
.quote em {
  font-style: normal;
  font-weight: 300;
  font-size: 23px;
}
.cjk {
  font-size: 23px;
  font-weight: 300;
  white-space: nowrap;
  color: #b8b8b8;
}
.green { color: #00e000; }
.red { color: #ff3232; }
.grey { color: #c0c0c0; }
.white { color: #f4f4f4; }

.q-name {
  height: 42px;
  box-sizing: border-box;
  display: flex;
  align-items: center;
  padding: 0 0 3px 32px;
  line-height: 36px;
}
.flag {
  color: #e03030;
  font-size: 22px;
  margin-right: 9px;
}
.name {
  color: #00e0ff;
  font-size: 28px;
}
.code {
  font-size: 20px;
  margin-left: 6px;
  letter-spacing: 0.7px;
  padding-top: 4px;
}
.q-price {
  height: 42px;
  box-sizing: border-box;
  display: flex;
  align-items: center;
  border-bottom: 2px solid #b01010;
  color: #00ff00;
  font-weight: 700;
  font-size: 29px;
  padding: 0 4px 0 4px;
}
.chg {
  margin-left: auto;
  display: flex;
  align-items: center;
}
.down-tri {
  width: 0;
  height: 0;
  border-left: 10px solid transparent;
  border-right: 10px solid transparent;
  border-top: 22px solid #00ff00;
  margin-right: 2px;
}
.pct {
  margin-left: 22px;
}

.book-row {
  height: 27px;
  line-height: 27px;
  display: grid;
  grid-template-columns: 120px 42px 102px 1fr;
  align-items: center;
  padding: 0 4px 0 2px;
}
.vol {
  display: flex;
  justify-content: flex-end;
  align-items: center;
  color: #c0c000;
}
.delta {
  text-align: right;
  font-size: 20px;
}
.book-split {
  height: 2px;
  margin-bottom: 1px;
  background: linear-gradient(90deg, #b07828 0, #b07828 235px, #2868a8 235px);
}
.buy {
  height: 138px;
  box-sizing: border-box;
  border-bottom: 2px solid #b01010;
}
.stats {
  box-sizing: border-box;
  border-bottom: 2px solid #b01010;
  padding-top: 2px;
}
.s5 {
  height: 146px;
}
.s3 {
  height: 93px;
}
.stat-row {
  height: 28.5px;
  line-height: 28px;
  display: grid;
  grid-template-columns: 50px 111px 8px 50px 1fr;
  align-items: center;
  padding: 0 2px 0 2px;
}
.stat-row b {
  text-align: right;
  white-space: nowrap;
}
.stat-row .cjk:nth-of-type(2) {
  grid-column: 4;
}
.flows {
  height: 120px;
  box-sizing: border-box;
  border-bottom: 2px solid #b01010;
  padding-top: 2px;
}
.flow-row {
  height: 28.5px;
  line-height: 28px;
  display: grid;
  grid-template-columns: 139px 128px 1fr;
  align-items: center;
  padding: 0 2px 0 2px;
}
.flow-val {
  display: flex;
  align-items: center;
}
.flow-val b {
  margin-left: auto;
}
.flow-bar {
  display: block;
}
.flow-pct {
  text-align: right;
}
.flow-down .flow-bar { background: #00c000; }
.flow-down b, .flow-down em { color: #00ff00; }
.flow-up .flow-bar { background: #ff3232; }
.flow-up b, .flow-up em { color: #ff3232; }

.trades {
  padding-top: 1px;
}
.trade-row {
  height: 27px;
  line-height: 27px;
  display: grid;
  grid-template-columns: 117px 40px 92px 40px 1fr;
  align-items: center;
  padding: 0 4px 0 2px;
}
.side {
  padding-left: 19px;
}
.count {
  text-align: right;
}

/* 右侧图标栏 */
.rail {
  flex: 1;
  background: #f0f0f0;
  border-left: 1px solid #909090;
  margin-top: -1px;
}
.rail-item {
  height: 34.4px;
  display: flex;
  align-items: center;
  justify-content: center;
}
.rail-div {
  height: 1px;
  margin: 6px 2px 6px 2px;
  background: #a8a8a8;
}
.rail-div.low {
  margin: 6px 2px 7px 2px;
}
.arrow {
  fill: #fff;
  stroke: #5a9be8;
  stroke-width: 2;
}
.ibox {
  fill: #fff;
  stroke: #5a9be8;
  stroke-width: 2;
}
.ibox.teal {
  stroke: #3a9a9a;
}
.itext {
  fill: #1c50b0;
  font-size: 15px;
  text-anchor: middle;
  letter-spacing: -0.5px;
}
.itext.orange {
  fill: #f07030;
  font-size: 17px;
}
.itext.fx {
  font-family: "Liberation Serif", serif;
  font-style: italic;
  font-size: 14px;
}
.dollar {
  fill: #c82020;
  font-size: 24px;
  font-weight: 700;
  text-anchor: middle;
}
.rsi {
  color: #4050a8;
  font-weight: 700;
  font-size: 16px;
  letter-spacing: -0.5px;
}
.rail-text {
  color: #2050a0;
  font-size: 17px;
}
.rail-text.selected {
  background: #f8f8f8;
  border: 1px solid #b0b0b0;
  border-right: 0;
  box-sizing: border-box;
}

/* 底部指数栏 */
.statusbar {
  flex: 1;
  display: flex;
  align-items: center;
  background: #f0f0f0;
  white-space: nowrap;
  overflow: hidden;
  border-top: 1px solid #c8c8c8;
}
.idx-icon {
  margin-left: 1px;
  flex: none;
}
.idx {
  flex: none;
  font-size: 21px;
}
.idx.cn {
  font-size: 24px;
  font-weight: 300;
  color: #222;
  padding-left: 1px;
  box-sizing: border-box;
}
.idx.up { color: #008000; }
.idx.dn { color: #f00000; }
.idx.ink { color: #111; }

.banner {
  position: absolute;
  left: 1080px;
  top: 1286px;
  right: 0;
  bottom: 0;
  display: flex;
  align-items: center;
  background: #80acda;
}
.banner-title {
  margin-left: 19px;
  font-family: "Noto Sans CJK SC", sans-serif;
  font-weight: 900;
  font-size: 76px;
  line-height: 1;
  color: #1a0a8c;
  white-space: nowrap;
}
.banner-logo {
  margin-left: 37px;
  flex: none;
}
.ring-label {
  fill: #fff;
  font-size: 8px;
}
.banner-url {
  margin-left: 32px;
  font-family: "DejaVu Serif", serif;
  font-weight: 700;
  font-size: 71px;
  line-height: 1;
  letter-spacing: -1px;
  color: #fafafa;
  white-space: nowrap;
  -webkit-text-stroke: 1.5px #fafafa;
}
</style>
